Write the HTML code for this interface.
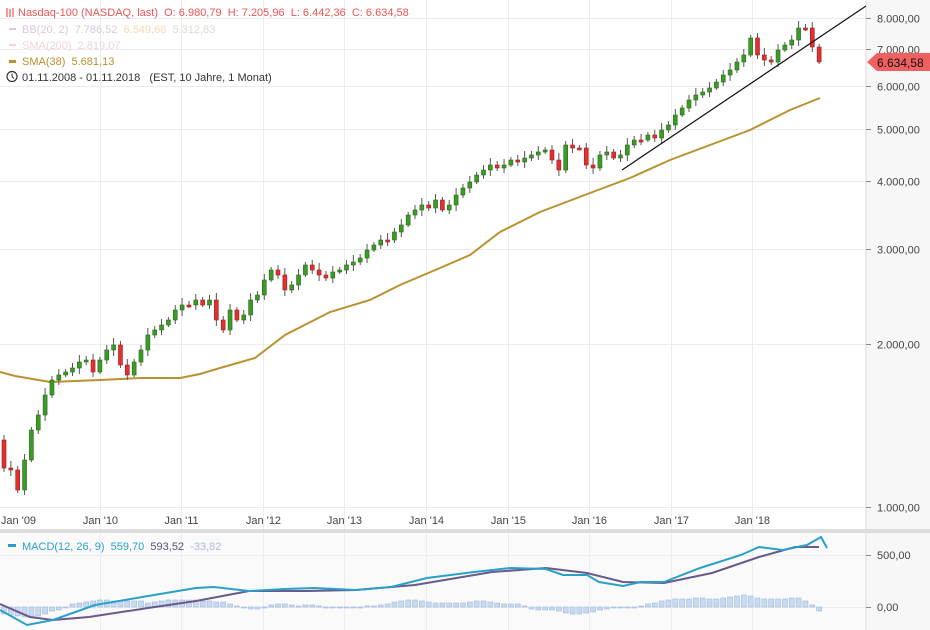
<!DOCTYPE html><html><head><meta charset="utf-8"><style>
body{margin:0;width:930px;height:630px;overflow:hidden;background:#fff;font-family:"Liberation Sans",sans-serif}
svg{display:block}
text{font-family:"Liberation Sans",sans-serif;font-size:11px;white-space:pre}
</style></head><body>
<svg id="s" width="930" height="630" xmlns="http://www.w3.org/2000/svg">
<rect x="866" y="0" width="64" height="630" fill="#f7f7f7"/>
<rect x="0" y="533" width="866" height="97" fill="#fafafa"/>
<g id="grid" stroke="#ececec" stroke-width="1"></g>
<line x1="866" y1="0" x2="866" y2="630" stroke="#ddd"/>
<rect x="0" y="529" width="930" height="4" fill="#ddd"/>
<g id="sma"></g>
<g id="candles"></g>
<line x1="622" y1="170" x2="866" y2="6" stroke="#111" stroke-width="1.2"/>
<g id="macd"></g>
<g id="axis" fill="#444"></g>
<polygon points="867,62 877,53 930,53 930,71 877,71" fill="#f06060"/>
<text x="877" y="67" fill="#111" style="font-size:12px">6.634,58</text>
<g>
<text x="18" y="16" fill="#e55">Nasdaq-100 (NASDAQ, last)  O: 6.980,79  H: 7.205,96  L: 6.442,36  C: 6.634,58</text>
<path d="M7 8v9M10 9v8M13 8v9" stroke="#e55" stroke-width="1.2"/>
<rect x="9" y="28" width="7" height="2" fill="#dcc8dc"/><text x="22" y="33" fill="#dcc8dc">BB(20, 2)  7.786,52  <tspan fill="#f6d8b8">6.549,68</tspan>  <tspan fill="#d8dcd0">5.312,83</tspan></text>
<rect x="9" y="44" width="7" height="2" fill="#f2d4d4"/><text x="22" y="49" fill="#f2d4d4">SMA(200)  2.819,07</text>
<rect x="9" y="60" width="7" height="3" fill="#b8922e"/><text x="22" y="65" fill="#b8922e">SMA(38)  5.681,13</text>
<circle cx="12" cy="76.5" r="5" fill="none" stroke="#333" stroke-width="1.2"/><path d="M12 73.5v3l2 2" stroke="#333" fill="none"/>
<text x="22" y="81" fill="#333">01.11.2008 - 01.11.2018   (EST, 10 Jahre, 1 Monat)</text>
<rect x="8" y="544" width="8" height="3" fill="#2aa0c8"/>
<text x="22" y="550" fill="#2aa0c8">MACD(12, 26, 9)  559,70  <tspan fill="#5a4e7a">593,52</tspan>  <tspan fill="#a8bcd8">-33,82</tspan></text>
</g>
</svg>
<script>
(function(){
var NS="http://www.w3.org/2000/svg";
function el(p,t,a){var e=document.createElementNS(NS,t);for(var k in a)e.setAttribute(k,a[k]);document.getElementById(p).appendChild(e);return e}
var Y=function(v){return 507-541.5*Math.log10(v/1000)};
[1000,2000,3000,4000,5000,6000,7000,8000].forEach(function(v){var y=Math.round(Y(v))+.5;el('grid','line',{x1:0,x2:866,y1:y,y2:y});
var t=el('axis','text',{x:877,y:y+4});t.textContent=(v/1000)+".000,00";el('axis','line',{x1:866,x2:871,y1:y,y2:y,stroke:'#888'})});
var yrs=["'09","'10","'11","'12","'13","'14","'15","'16","'17","'18"];
for(var i=0;i<10;i++){var x=Math.round(18+81.6*i)+.5;if(i>0){el('grid','line',{x1:x,x2:x,y1:0,y2:529});el('grid','line',{x1:x,x2:x,y1:533,y2:630})}
var t=el('axis','text',{x:x,y:524,'text-anchor':'middle'});t.textContent="Jan "+yrs[i]}
[555,607].forEach(function(y,j){el('grid','line',{x1:0,x2:866,y1:y+.5,y2:y+.5});var t=el('axis','text',{x:877,y:y+4});t.textContent=j?"0,00":"500,00";el('axis','line',{x1:866,x2:871,y1:y+.5,y2:y+.5,stroke:'#888'})});
var c=[440,468,470,490,460,430,415,395,380,375,372,368,362,360,372,360,350,345,365,375,362,350,335,330,325,320,310,305,305,300,305,300,320,330,310,320,315,300,295,280,270,275,290,285,275,265,270,275,278,272,270,265,262,258,250,245,240,240,232,225,215,210,205,208,200,210,205,195,188,182,175,170,165,168,165,160,162,158,155,152,150,160,170,145,148,148,165,168,155,152,158,155,145,140,140,135,138,130,125,115,108,100,95,92,88,82,75,70,62,55,38,55,60,62,50,45,40,28,28,47,62];
var N=c.length-1;
for(var i=1;i<c.length;i++){var o=c[i-1],cl=c[i],x=4+6.85*(i-1),up=cl<o;var tp=Math.min(o,cl),bt=Math.max(o,cl);
var h=Math.max(bt-tp,2);var wk=3+((i*7)%5);
el('candles','line',{x1:x,x2:x,y1:tp-wk,y2:bt+wk-1,stroke:'#555','stroke-width':1});
el('candles','rect',{x:x-2,y:tp,width:4,height:h,fill:up?'#3c9a28':'#e03030',stroke:up?'#2a6a18':'#a02020','stroke-width':.6})}
el('sma','polyline',{points:"0,372 15,376 50,382 100,380 140,378 180,378 200,374 220,368 255,358 285,335 330,312 370,300 400,285 440,268 470,255 500,232 540,212 590,193 630,178 670,160 710,145 750,130 790,110 820,98",fill:'none',stroke:'#b8922e','stroke-width':2});
var bl=[-6,-8,-9,-9,-7,-4,-2,2,4,5,6,6,5,5,6,4,5,6,6,7,6,5,5,4,2,-1,-2,-1,2,3,2,1,2,1,0,-1,-1,0,1,1,3,5,6,6,5,4,4,4,4,5,5,4,3,3,2,-2,-3,-3,-4,-6,-6,-5,-3,-2,0,0,0,2,4,6,7,7,8,8,7,8,9,11,10,7,7,7,8,8,4,-4];
for(var i=0;i<N;i++){var x=4+6.85*i,f=i*(bl.length-1)/(N-1),k=Math.floor(f),r=f-k;var b=bl[k]+(k+1<bl.length?(bl[k+1]-bl[k])*r:0);var v=Math.round(b*1.1);
el('macd','rect',{x:x-2.5,y:v>0?607-v:607,width:5,height:Math.abs(v)||1,fill:'#c8daf0',stroke:'#9cb8dc','stroke-width':.6})}
el('macd','polyline',{points:"0,604 30,617 53,620 89,617 148,608 196,601 249,591 308,591 356,590 415,585 492,572 546,568 587,573 623,582 664,583 712,573 759,557 795,547 819,547",fill:'none',stroke:'#6a5a8a','stroke-width':2});
el('macd','polyline',{points:"0,610 27,625 53,620 95,605 119,601 154,595 196,588 214,587 249,591 285,589 314,588 356,590 391,587 427,578 474,572 510,568 546,569 563,575 587,575 599,582 623,586 641,582 664,582 700,568 741,555 759,547 783,550 807,545 821,537 827,548",fill:'none',stroke:'#2aa0c8','stroke-width':2});
})();
</script>
</body></html>
